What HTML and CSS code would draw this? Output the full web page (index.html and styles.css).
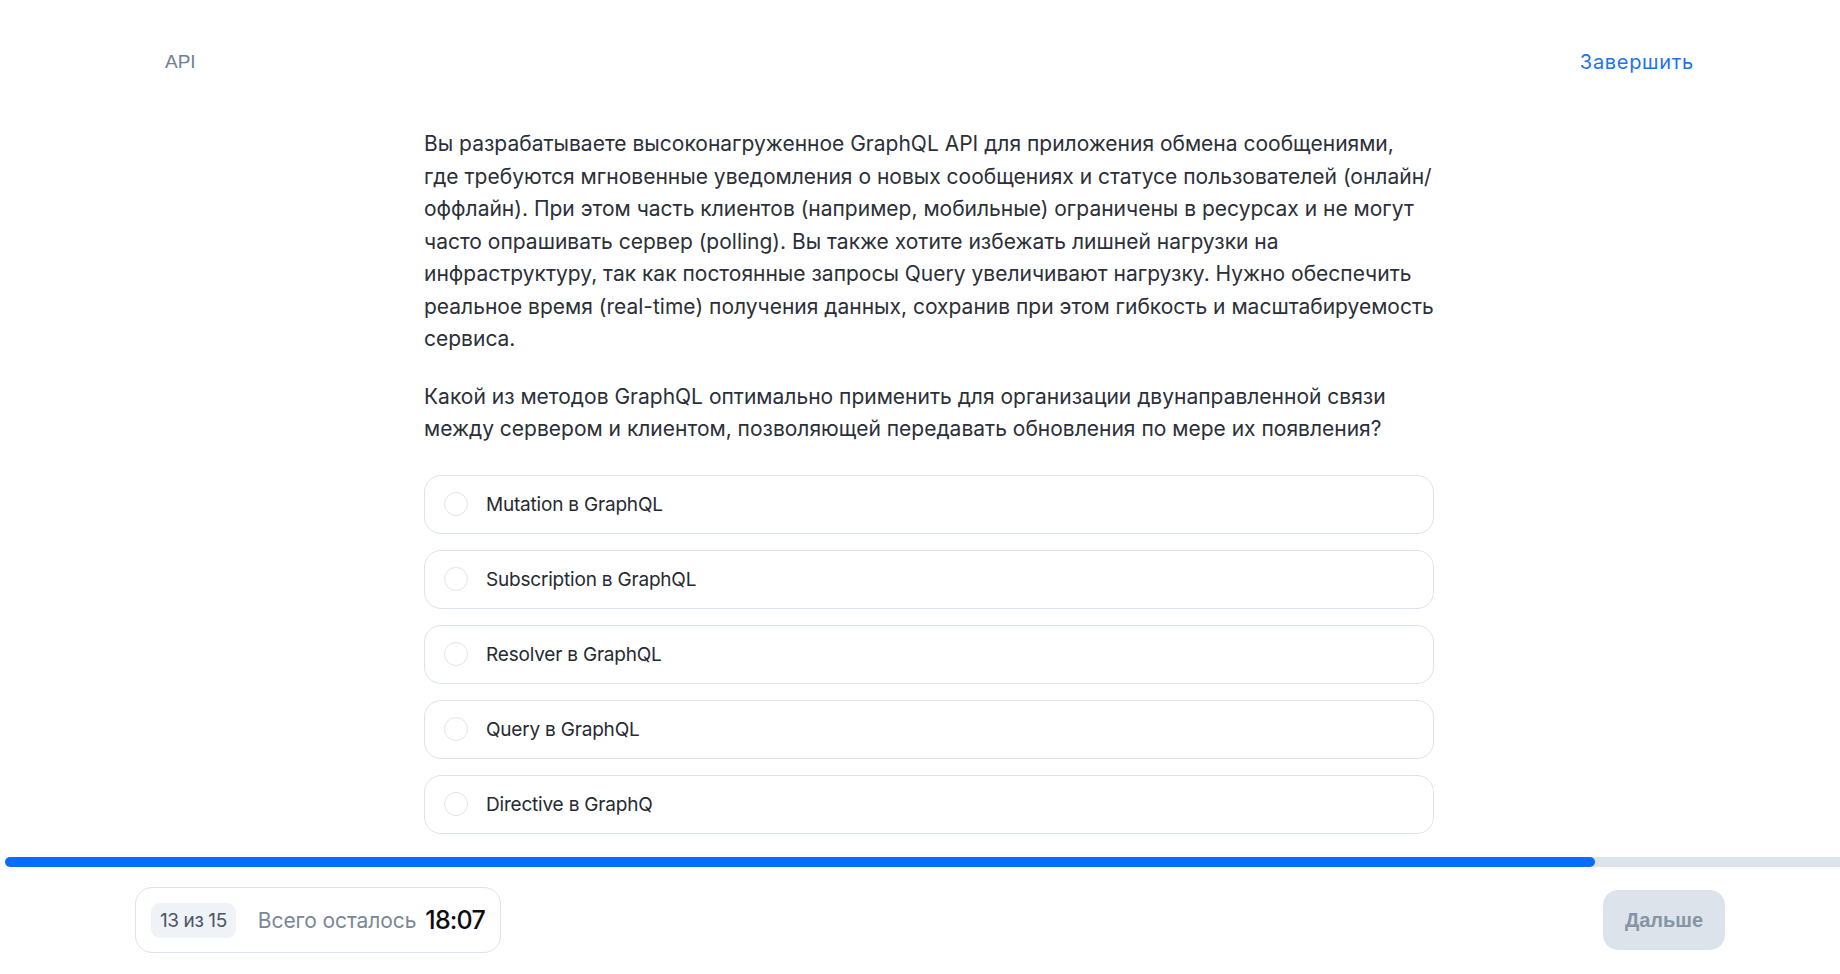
FILE: index.html
```html
<!DOCTYPE html>
<html lang="ru">
<head>
<meta charset="utf-8">
<title>Тест</title>
<link rel="stylesheet" href="styles.css">
</head>
<body>
<div class="page">
  <header class="topbar">
    <span class="crumb">API</span>
    <a class="finish" href="#">Завершить</a>
  </header>
  <main class="main">
    <div class="question">
      <p class="text">Вы разрабатываете высоконагруженное GraphQL API для приложения обмена сообщениями,<br>где требуются мгновенные уведомления о новых сообщениях и статусе пользователей (онлайн/оффлайн). При этом часть клиентов (например, мобильные) ограничены в ресурсах и не могут часто опрашивать сервер (polling). Вы также хотите избежать лишней нагрузки на инфраструктуру, так как постоянные запросы Query увеличивают нагрузку. Нужно обеспечить реальное время (real-time) получения данных, сохранив при этом гибкость и масштабируемость сервиса.</p>
      <p class="text">Какой из методов GraphQL оптимально применить для организации двунаправленной связи между сервером и клиентом, позволяющей передавать обновления по мере их появления?</p>
      <ul class="options">
        <li class="option"><span class="radio"></span><span class="label">Mutation в GraphQL</span></li>
        <li class="option"><span class="radio"></span><span class="label">Subscription в GraphQL</span></li>
        <li class="option"><span class="radio"></span><span class="label">Resolver в GraphQL</span></li>
        <li class="option"><span class="radio"></span><span class="label">Query в GraphQL</span></li>
        <li class="option"><span class="radio"></span><span class="label">Directive в GraphQ</span></li>
      </ul>
    </div>
  </main>
  <div class="progress"><div class="progress-fill" style="width: 86.67%"></div></div>
  <footer class="footer">
    <div class="status">
      <span class="counter">13 из 15</span>
      <span class="remaining">Всего осталось</span>
      <span class="timer">18:07</span>
    </div>
    <button class="next" type="button">Дальше</button>
  </footer>
</div>
</body>
</html>
```
FILE: styles.css
```css
* { box-sizing: border-box; }
html, body { margin: 0; padding: 0; }
body {
  font-family: Inter, "Noto Sans", sans-serif;
  color: #2b2f38;
  background: #fff;
}
.page {
  height: 974px;
  display: flex;
  flex-direction: column;
}
.topbar {
  display: flex;
  justify-content: space-between;
  align-items: center;
  padding: 50px 146px 0 165px;
  height: 74px;
}
.crumb {
  font-family: "Liberation Sans", Arial, sans-serif;
  font-size: 19px;
  color: #70809a;
  line-height: 24px;
}
.finish {
  font-size: 20px;
  color: #1a73f5;
  text-decoration: none;
  line-height: 24px;
  letter-spacing: 0.7px;
}
.main {
  flex: 1;
  padding: 54px 0 0 424px;
}
.question { width: 1010px; }
.text {
  margin: 0 -6px 25px 0;
  font-size: 21px;
  line-height: 32.5px;
  letter-spacing: 0;
}
.options {
  list-style: none;
  margin: 29px 0 0;
  padding: 0;
  display: flex;
  flex-direction: column;
  gap: 16px;
}
.option {
  height: 59px;
  border: 1px solid #dde3ec;
  border-radius: 17px;
  display: flex;
  align-items: center;
  padding-left: 19px;
  gap: 18px;
}
.radio {
  width: 24px;
  height: 24px;
  border: 1.5px solid #dfe5ee;
  border-radius: 50%;
  flex: none;
}
.label {
  font-size: 19px;
  color: #262a31;
  letter-spacing: -0.2px;
}
.progress {
  height: 10px;
  margin-left: 5px;
  background: #dde3eb;
  border-radius: 5px 0 0 5px;
}
.progress-fill {
  height: 100%;
  background: #0a6cff;
  border-radius: 5px;
}
.footer {
  display: flex;
  justify-content: space-between;
  align-items: center;
  padding: 20px 115px 21px 135px;
}
.status {
  display: flex;
  align-items: center;
  height: 66px;
  border: 1px solid #dde3ec;
  border-radius: 17px;
  padding: 0 15px;
}
.counter {
  background: #eff2f6;
  border-radius: 9px;
  height: 35px;
  padding: 0 9px;
  display: flex;
  align-items: center;
  font-size: 19px;
  color: #4a5565;
  letter-spacing: -0.4px;
}
.remaining {
  margin-left: 22px;
  font-size: 21px;
  color: #7a8797;
  letter-spacing: -0.1px;
}
.timer {
  margin-left: 9px;
  font-size: 25px;
  font-weight: 500;
  color: #0b0d12;
  letter-spacing: -0.8px;
}
.next {
  width: 122px;
  height: 60px;
  border: none;
  border-radius: 15px;
  background: #dde3eb;
  color: #8594a6;
  font-family: "Liberation Sans", Arial, sans-serif;
  font-weight: 700;
  font-size: 20px;
  padding: 0;
}
```
